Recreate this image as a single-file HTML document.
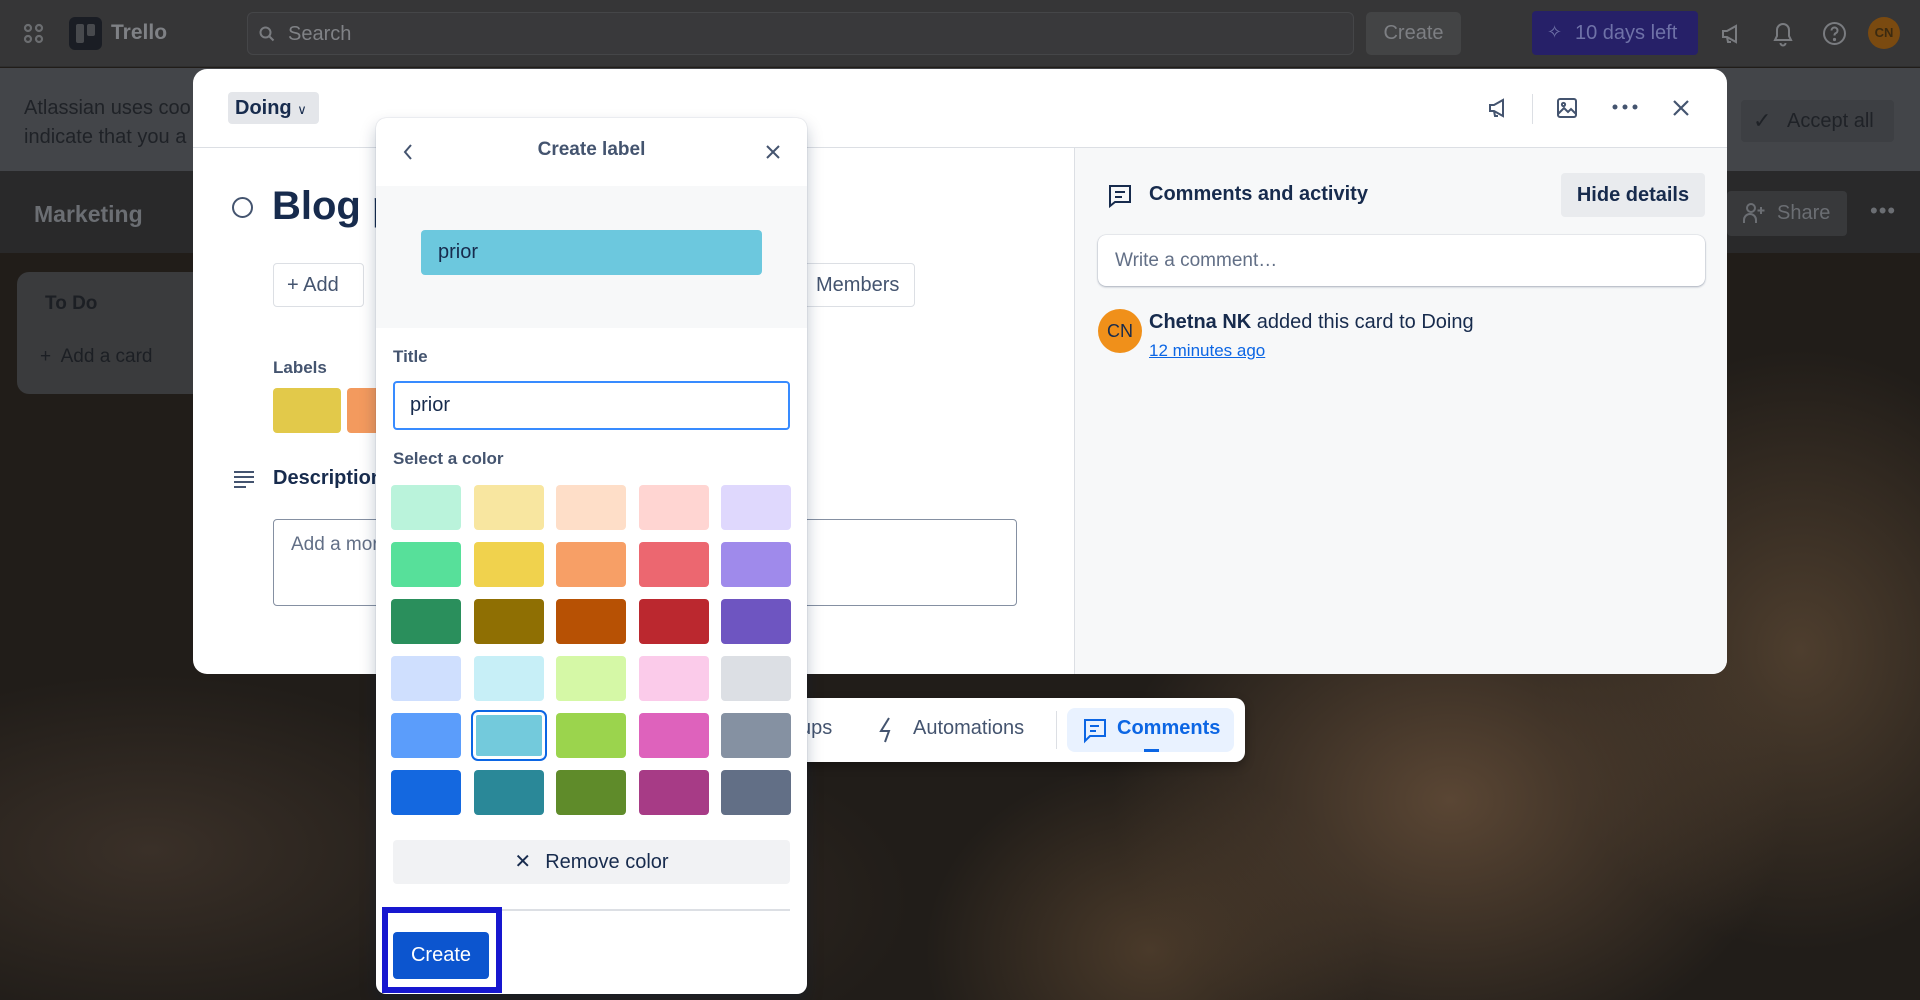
<!DOCTYPE html>
<html><head><meta charset="utf-8"><style>
*{box-sizing:border-box;margin:0;padding:0}
body{width:1920px;height:1000px;overflow:hidden;position:relative;font-family:"Liberation Sans",sans-serif;color:#172b4d;
background:
radial-gradient(ellipse 450px 350px at 1450px 800px,#5a4634 0%,transparent 75%),
radial-gradient(ellipse 350px 400px at 1800px 650px,#4e3e2e 0%,transparent 75%),
radial-gradient(ellipse 300px 250px at 1150px 950px,#4a3a2a 0%,transparent 75%),
radial-gradient(ellipse 500px 250px at 150px 850px,#3a3028 0%,transparent 70%),
radial-gradient(ellipse 300px 200px at 700px 900px,#2e2620 0%,transparent 70%),
#211d19;}
.a{position:absolute}
.dim{color:#8f9196}
</style></head><body>
<!-- top bar -->
<div class="a" style="left:0;top:0;width:1920px;height:67px;background:#363637;border-bottom:1px solid #2e2e2e"></div>
<svg class="a" style="left:23px;top:23px" width="22" height="22" viewBox="0 0 22 22" fill="none" stroke="#6b6d70" stroke-width="2.2"><circle cx="5" cy="5" r="3"/><circle cx="16" cy="5" r="3"/><circle cx="5" cy="16" r="3"/><circle cx="16" cy="16" r="3"/></svg>
<div class="a" style="left:69px;top:17px;width:33px;height:33px;border-radius:6px;background:#1a1d24"><div class="a" style="left:7px;top:7px;width:8px;height:19px;background:#47494d;border-radius:2px"></div><div class="a" style="left:18px;top:7px;width:8px;height:12px;background:#47494d;border-radius:2px"></div></div>
<div class="a dim" style="left:111px;top:21px;font-size:21px;font-weight:bold;color:#7f8185">Trello</div>
<div class="a" style="left:247px;top:12px;width:1107px;height:43px;border:1px solid #454648;border-radius:6px;background:#39393b"></div>
<svg class="a" style="left:259px;top:26px" width="16" height="16" viewBox="0 0 16 16" fill="none" stroke="#7a7c80" stroke-width="2"><circle cx="6.5" cy="6.5" r="5"/><path d="M10.5 10.5l4 4"/></svg>
<div class="a" style="left:288px;top:23px;font-size:20px;color:#808286">Search</div>
<div class="a" style="left:1366px;top:12px;width:95px;height:43px;border-radius:5px;background:#434445;color:#7d7f83;font-size:20px;text-align:center;line-height:43px">Create</div>
<div class="a" style="left:1532px;top:11px;width:166px;height:44px;border-radius:4px;background:#262068;color:#6f72a8;font-size:20px;line-height:44px;padding-left:43px">10 days left</div>
<div class="a" style="left:1547px;top:22px;color:#6f72a8;font-size:18px">✧</div>
<svg class="a" style="left:1719px;top:22px" width="24" height="24" viewBox="0 0 24 24" fill="none" stroke="#7a7c80" stroke-width="2"><path d="M4 9h4l9-5v16l-9-5H4z M8 15l1 5h3"/></svg>
<svg class="a" style="left:1771px;top:21px" width="24" height="26" viewBox="0 0 24 26" fill="none" stroke="#7a7c80" stroke-width="2"><path d="M12 3a6 6 0 0 0-6 6v6l-2 4h16l-2-4V9a6 6 0 0 0-6-6zM9.5 22a2.5 2.5 0 0 0 5 0"/></svg>
<svg class="a" style="left:1822px;top:21px" width="25" height="25" viewBox="0 0 25 25" fill="none" stroke="#7a7c80" stroke-width="2"><circle cx="12.5" cy="12.5" r="10.5"/><path d="M9.5 9.5a3 3 0 1 1 4 2.8c-1 .5-1 1.2-1 2.2"/><circle cx="12.5" cy="18.5" r=".6" fill="#7a7c80"/></svg>
<div class="a" style="left:1868px;top:17px;width:32px;height:32px;border-radius:50%;background:#7a4a10;color:#3b2a10;font-size:13px;font-weight:bold;text-align:center;line-height:32px">CN</div>
<!-- cookie banner -->
<div class="a" style="left:0;top:68px;width:1920px;height:103px;background:#434549"></div>
<div class="a" style="left:24px;top:94px;font-size:20px;color:#1f2227;line-height:29px">Atlassian uses coo<br>indicate that you a</div>
<div class="a" style="left:1741px;top:100px;width:153px;height:42px;border-radius:4px;background:#3d3f43;color:#1f2227;font-size:20px;line-height:42px;padding-left:46px">Accept all</div>
<div class="a" style="left:1753px;top:108px;font-size:22px;color:#1f2227">✓</div>
<!-- board header -->
<div class="a" style="left:0;top:171px;width:1920px;height:82px;background:#29292a"></div>
<div class="a" style="left:34px;top:201px;font-size:23px;font-weight:bold;color:#6b6e73">Marketing</div>
<div class="a" style="left:1727px;top:191px;width:120px;height:45px;border-radius:4px;background:#38393b;color:#6b6e73;font-size:20px;line-height:45px;padding-left:50px">Share</div>
<svg class="a" style="left:1742px;top:201px" width="24" height="24" viewBox="0 0 24 24" fill="none" stroke="#6b6e73" stroke-width="2"><circle cx="9" cy="7" r="4"/><path d="M2 22v-3a6 6 0 0 1 12 0v3M19 6v7M15.5 9.5h7"/></svg>
<div class="a" style="left:1870px;top:198px;font-size:22px;color:#6b6e73;letter-spacing:1px">•••</div>
<!-- list -->
<div class="a" style="left:17px;top:272px;width:200px;height:122px;border-radius:12px;background:#3a3b3d"></div>
<div class="a" style="left:45px;top:293px;font-size:19px;font-weight:bold;color:#1c1f24">To Do</div>
<div class="a" style="left:40px;top:346px;font-size:19px;color:#1c1f24">+&nbsp; Add a card</div>

<!-- modal -->
<div class="a" style="left:193px;top:69px;width:1534px;height:605px;border-radius:14px;background:#fff;overflow:hidden">
  <div class="a" style="left:0;top:78px;width:1534px;height:1px;background:#dcdfe4"></div>
  <div class="a" style="left:881px;top:79px;width:653px;height:526px;background:#f7f8f9;border-left:1px solid #dcdfe4"></div>
</div>
<div class="a" style="left:228px;top:92px;width:91px;height:32px;border-radius:4px;background:#e4e6ea;font-size:20px;font-weight:bold;color:#172b4d;line-height:32px;padding-left:7px">Doing <span style="font-size:13px;font-weight:normal">&#8744;</span></div>
<!-- header icons -->
<svg class="a" style="left:1486px;top:96px" width="24" height="24" viewBox="0 0 24 24" fill="none" stroke="#44546f" stroke-width="2"><path d="M4 9h4l9-5v16l-9-5H4z M8 15l1 5h3"/></svg>
<div class="a" style="left:1532px;top:94px;width:1px;height:30px;background:#dcdfe4"></div>
<svg class="a" style="left:1556px;top:97px" width="22" height="22" viewBox="0 0 22 22" fill="none" stroke="#44546f" stroke-width="2"><rect x="2" y="2" width="18" height="18" rx="2"/><circle cx="7.5" cy="7.5" r="1.6"/><path d="M2 17l6-6 4 4 3-3 5 5"/></svg>
<svg class="a" style="left:1612px;top:104px" width="26" height="6" viewBox="0 0 26 6" fill="#44546f"><circle cx="3" cy="3" r="2.5"/><circle cx="13" cy="3" r="2.5"/><circle cx="23" cy="3" r="2.5"/></svg>
<svg class="a" style="left:1671px;top:98px" width="20" height="20" viewBox="0 0 20 20" stroke="#44546f" stroke-width="2.2"><path d="M3 3l14 14M17 3L3 17"/></svg>
<!-- left content -->
<div class="a" style="left:232px;top:197px;width:21px;height:21px;border-radius:50%;border:2px solid #44546f"></div>
<div class="a" style="left:272px;top:184px;font-size:40px;font-weight:bold;color:#172b4d">Blog p</div>
<div class="a" style="left:273px;top:263px;width:91px;height:44px;border:1px solid #dcdfe4;border-radius:4px;font-size:20px;color:#44546f;line-height:42px;padding-left:13px">+ Add</div>
<div class="a" style="left:790px;top:263px;width:125px;height:44px;border:1px solid #dcdfe4;border-radius:4px;font-size:20px;color:#44546f;line-height:42px;padding-left:25px">Members</div>
<div class="a" style="left:273px;top:358px;font-size:17px;font-weight:bold;color:#44546f">Labels</div>
<div class="a" style="left:273px;top:388px;width:68px;height:45px;border-radius:4px;background:#e2c94a"></div>
<div class="a" style="left:347px;top:388px;width:40px;height:45px;border-radius:4px;background:#f39a5e"></div>
<svg class="a" style="left:233px;top:469px" width="22" height="20" viewBox="0 0 22 20" stroke="#44546f" stroke-width="2"><path d="M1 3h20M1 8h20M1 13h20M1 18h12"/></svg>
<div class="a" style="left:273px;top:467px;font-size:20px;font-weight:bold;color:#172b4d">Description</div>
<div class="a" style="left:273px;top:519px;width:744px;height:87px;border:1px solid #8590a2;border-radius:4px;font-size:19px;color:#626f86;padding:14px 17px">Add a more detailed description…</div>
<!-- right pane content -->
<svg class="a" style="left:1107px;top:183px" width="26" height="26" viewBox="0 0 26 26" fill="none" stroke="#172b4d" stroke-width="2"><path d="M3 3h20v16H8l-5 4z M8 9h10M8 14h7"/></svg>
<div class="a" style="left:1149px;top:183px;font-size:20px;font-weight:bold">Comments and activity</div>
<div class="a" style="left:1561px;top:173px;width:144px;height:44px;border-radius:4px;background:#e9ebee;font-size:20px;font-weight:bold;color:#172b4d;line-height:44px;text-align:center">Hide details</div>
<div class="a" style="left:1098px;top:235px;width:607px;height:51px;border-radius:8px;background:#fff;box-shadow:0 1px 2px rgba(9,30,66,.3),0 0 1px rgba(9,30,66,.3);font-size:19px;color:#626f86;line-height:51px;padding-left:17px">Write a comment…</div>
<div class="a" style="left:1098px;top:309px;width:44px;height:44px;border-radius:50%;background:#f0901a;color:#172b4d;font-size:18px;text-align:center;line-height:44px">CN</div>
<div class="a" style="left:1149px;top:311px;font-size:20px;color:#172b4d"><b>Chetna NK</b> added this card to Doing</div>
<div class="a" style="left:1149px;top:341px;font-size:17px;color:#0c66e4;text-decoration:underline">12 minutes ago</div>

<!-- bottom toolbar -->
<div class="a" style="left:780px;top:698px;width:465px;height:64px;border-radius:10px;background:#fff;box-shadow:0 4px 10px rgba(0,0,0,.3)"></div>
<div class="a" style="left:800px;top:717px;font-size:20px;color:#44546f">ups</div>
<svg class="a" style="left:877px;top:716px" width="20" height="28" viewBox="0 0 20 28" fill="none" stroke="#44546f" stroke-width="2"><path d="M12 2L4 15h8l-4 11"/></svg>
<div class="a" style="left:913px;top:717px;font-size:20px;color:#44546f">Automations</div>
<div class="a" style="left:1056px;top:711px;width:1px;height:38px;background:#dcdfe4"></div>
<div class="a" style="left:1067px;top:708px;width:167px;height:44px;border-radius:8px;background:#e9f2ff"></div>
<svg class="a" style="left:1083px;top:718px" width="24" height="26" viewBox="0 0 24 26" fill="none" stroke="#0c66e4" stroke-width="2"><path d="M2 2h20v16H7l-5 5z M7 8h9M7 13h6"/></svg>
<div class="a" style="left:1117px;top:717px;font-size:20px;font-weight:bold;color:#0c66e4">Comments</div>
<div class="a" style="left:1144px;top:749px;width:15px;height:3px;background:#0c66e4"></div>

<!-- popover -->
<div class="a" style="left:376px;top:118px;width:431px;height:876px;border-radius:10px;background:#fff;box-shadow:0 8px 16px rgba(9,30,66,.25),0 0 1px rgba(9,30,66,.3);overflow:hidden">
  <svg class="a" style="left:26px;top:25px" width="12" height="18" viewBox="0 0 12 18" fill="none" stroke="#44546f" stroke-width="2"><path d="M9 2L3 9l6 7"/></svg>
  <div class="a" style="left:0;top:21px;width:431px;text-align:center;font-size:19px;font-weight:bold;color:#44546f">Create label</div>
  <svg class="a" style="left:389px;top:26px" width="16" height="16" viewBox="0 0 16 16" stroke="#44546f" stroke-width="2"><path d="M2 2l12 12M14 2L2 14"/></svg>
  <div class="a" style="left:0;top:68px;width:431px;height:142px;background:#f7f8f9"></div>
  <div class="a" style="left:45px;top:112px;width:341px;height:45px;border-radius:4px;background:#6cc8de;font-size:20px;color:#172b4d;line-height:45px;padding-left:17px">prior</div>
  <div class="a" style="left:17px;top:229px;font-size:17px;font-weight:bold;color:#44546f">Title</div>
  <div class="a" style="left:17px;top:263px;width:397px;height:49px;border:2px solid #388bff;border-radius:4px;font-size:20px;color:#172b4d;line-height:45px;padding-left:15px">prior</div>
  <div class="a" style="left:17px;top:331px;font-size:17px;font-weight:bold;color:#44546f">Select a color</div>
</div>
<!-- swatches -->
<div class="a" style="left:391px;top:485px;display:grid;grid-template-columns:repeat(5,70px);grid-auto-rows:45px;column-gap:12.5px;row-gap:12px">
<div style="background:#baf3db;border-radius:4px"></div><div style="background:#f8e6a0;border-radius:4px"></div><div style="background:#fedec8;border-radius:4px"></div><div style="background:#ffd5d2;border-radius:4px"></div><div style="background:#dfd8fd;border-radius:4px"></div>
<div style="background:#57e09a;border-radius:4px"></div><div style="background:#f0d24d;border-radius:4px"></div><div style="background:#f79f66;border-radius:4px"></div><div style="background:#ec6770;border-radius:4px"></div><div style="background:#9f8aeb;border-radius:4px"></div>
<div style="background:#2a8f5c;border-radius:4px"></div><div style="background:#8f6f03;border-radius:4px"></div><div style="background:#b75104;border-radius:4px"></div><div style="background:#bb282f;border-radius:4px"></div><div style="background:#6e55c1;border-radius:4px"></div>
<div style="background:#cfdffe;border-radius:4px"></div><div style="background:#c7eff7;border-radius:4px"></div><div style="background:#d5f8a6;border-radius:4px"></div><div style="background:#fbcbea;border-radius:4px"></div><div style="background:#dcdfe4;border-radius:4px"></div>
<div style="background:#5b9dfb;border-radius:4px"></div><div style="background:#73cadc;border-radius:4px;outline:2px solid #0c66e4;outline-offset:1px;box-shadow:inset 0 0 0 2px #fff"></div><div style="background:#9bd44d;border-radius:4px"></div><div style="background:#de62bc;border-radius:4px"></div><div style="background:#8591a2;border-radius:4px"></div>
<div style="background:#1468e0;border-radius:4px"></div><div style="background:#2a8898;border-radius:4px"></div><div style="background:#5f8b2a;border-radius:4px"></div><div style="background:#a73b86;border-radius:4px"></div><div style="background:#626f86;border-radius:4px"></div>
</div>
<div class="a" style="left:393px;top:840px;width:397px;height:44px;border-radius:4px;background:#f1f2f4;font-size:20px;color:#172b4d;line-height:44px;text-align:center"><span style="font-size:20px;margin-right:14px">✕</span>Remove color</div>
<div class="a" style="left:393px;top:909px;width:397px;height:2px;background:#dcdfe4"></div>
<div class="a" style="left:382px;top:907px;width:120px;height:86px;border:6px solid #1717cf"></div>
<div class="a" style="left:393px;top:932px;width:96px;height:47px;border-radius:4px;background:#0c55cf;color:#fff;font-size:20px;line-height:47px;text-align:center">Create</div>
</body></html>
